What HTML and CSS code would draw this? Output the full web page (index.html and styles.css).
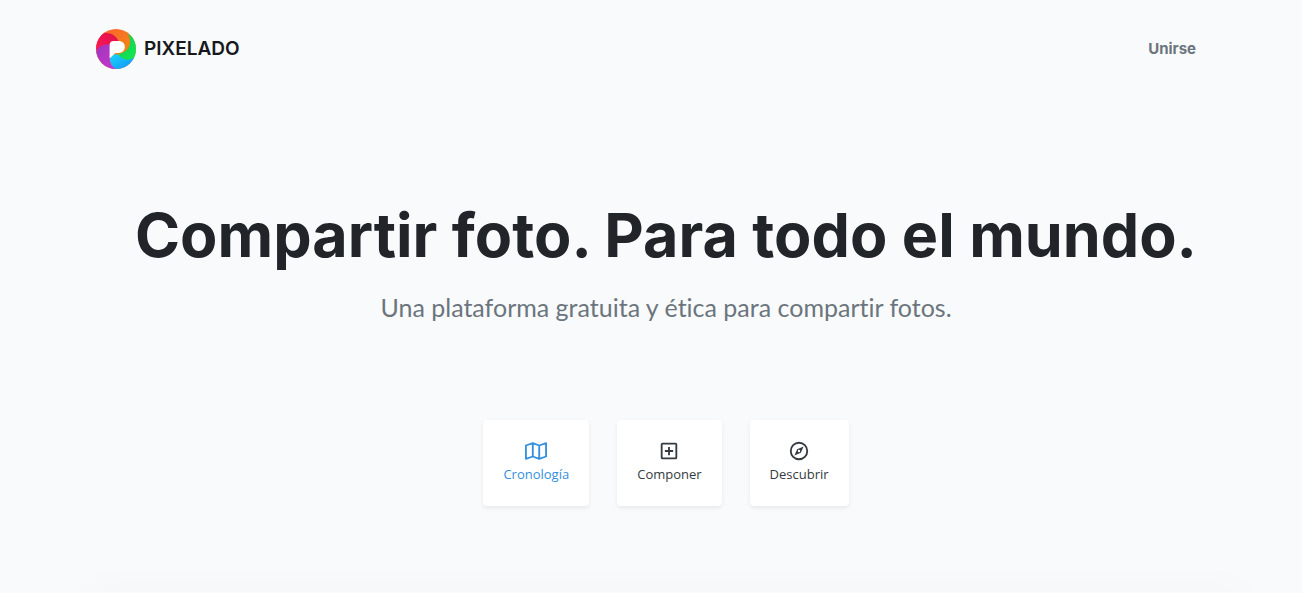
FILE: index.html
```html
<!DOCTYPE html>
<html lang="es">
<head>
<meta charset="utf-8">
<meta name="viewport" content="width=device-width, initial-scale=1">
<title>Pixelado</title>
<link rel="stylesheet" href="styles.css">
</head>
<body>
<div class="page">
  <header class="site-header">
    <a class="brand" href="#">
      <svg class="brand-logo" viewBox="0 0 50 50" aria-hidden="true">
        <defs>
          <clipPath id="disc"><circle cx="25" cy="25" r="25"/></clipPath>
          <linearGradient id="red" x1="0" y1="1" x2="1" y2="0"><stop offset="0" stop-color="#ff1a55"/><stop offset="1" stop-color="#dc0f4c"/></linearGradient>
          <linearGradient id="orange" x1="0" y1="0" x2="1" y2="1"><stop offset="0" stop-color="#ff5c34"/><stop offset="1" stop-color="#eb9a08"/></linearGradient>
          <linearGradient id="green" x1="0" y1="0" x2="1" y2="1"><stop offset="0" stop-color="#18c84a"/><stop offset="1" stop-color="#10f05a"/></linearGradient>
          <linearGradient id="blue" x1="0" y1="0" x2="1" y2="1"><stop offset="0" stop-color="#17d8f5"/><stop offset="1" stop-color="#1687ff"/></linearGradient>
          <linearGradient id="purple" x1="0" y1="0" x2="1" y2="1"><stop offset="0" stop-color="#9b35bc"/><stop offset="1" stop-color="#cf38cc"/></linearGradient>
        </defs>
        <g clip-path="url(#disc)">
          <rect width="50" height="50" fill="url(#orange)"/>
          <path d="M0 27V8L10 5C18 4 26 8 29 17L24 27Z" fill="url(#red)"/>
          <path d="M39 5C46 15 43 28 29 31L28 35C34 42 43 42 49 35L58 20Z" fill="url(#green)"/>
          <path d="M17 37C20 31 26 30 30 34C35 40 43 40 50 34V52H20Z" fill="url(#blue)"/>
          <path d="M-1 31C2 22 9 18 18 20V36C16 42 20 48 28 51H-1Z" fill="url(#purple)"/>
        </g>
        <path d="M17 37V20C17 17 19 15 22 15H28C33 15 36 18 36 22C36 27 33 30 28 30H24Z" fill="#fff"/>
      </svg>
      <span>PIXELADO</span>
    </a>
    <a class="join" href="#">Unirse</a>
  </header>
  <main class="hero">
    <h1 class="title">Compartir foto. Para todo el mundo.</h1>
    <p class="lead">Una plataforma gratuita y ética para compartir fotos.</p>
    <div class="tabs">
      <button class="tab tab-active" type="button">
        <svg class="tab-icon" viewBox="0 0 24 24" aria-hidden="true"><path d="M1 6 8.500 3.500 15.500 6 23 3.500V18L15.500 20.500 8.500 18 1 20.500ZM8.500 3.500V18M15.500 6V20.500"/></svg>
        <span>Cronología</span>
      </button>
      <button class="tab" type="button">
        <svg class="tab-icon" viewBox="0 0 24 24" aria-hidden="true"><rect x="4" y="4" width="16" height="16" rx="1"/><path d="M12 7.500V16.500M7.500 12H16.500"/></svg>
        <span>Componer</span>
      </button>
      <button class="tab" type="button">
        <svg class="tab-icon" viewBox="0 0 24 24" aria-hidden="true"><circle cx="12" cy="12" r="9"/><path class="needle" fill-rule="evenodd" d="M17 7 14 14 7 17 10 10ZM12 10.700A1.300 1.300 0 1 0 12 13.300 1.300 1.300 0 1 0 12 10.700Z"/></svg>
        <span>Descubrir</span>
      </button>
    </div>
  </main>
  <section class="preview"></section>
</div>
</body>
</html>
```

FILE: styles.css
```css
* { box-sizing: border-box; }
body {
  margin: 0;
  background: #f8fafc;
  color: #212529;
  font-family: Lato, sans-serif;
}
.page {
  max-width: 1302px;
  margin: 0 auto;
  padding: 29px 66px 0 96px;
}
.site-header {
  display: flex;
  justify-content: space-between;
  align-items: center;
  padding-right: 40px;
}
.brand {
  display: flex;
  align-items: center;
  gap: 8px;
  color: #16181b;
  font: 600 19px/24px Inter, sans-serif;
  text-decoration: none;
}
.brand-logo { width: 40px; height: 40px; }
.join {
  color: #6c757d;
  font: 700 15px/24px Inter, sans-serif;
  text-decoration: none;
}
.hero { padding: 130px 0 86px; text-align: center; }
.title {
  margin: 0 0 18px;
  font: 700 61px/72px Inter, sans-serif;
}
.lead {
  margin: 0;
  color: #6c757d;
  font-size: 25px;
  line-height: 36px;
  font-variant-ligatures: none;
}
.tabs {
  display: flex;
  justify-content: center;
  gap: 28px;
  margin-top: 95px;
}
.tab {
  display: flex;
  flex-direction: column;
  align-items: center;
  padding: 20px;
  border: 0;
  border-radius: 4px;
  background: #fff;
  box-shadow: 0 2px 4px rgba(0, 0, 0, 0.075);
  color: #343a40;
  font: 13px/24px "Open Sans", sans-serif;
  cursor: pointer;
}
.tab-active { color: #3490dc; }
.tab-icon {
  width: 22px;
  height: 22px;
  fill: none;
  stroke: currentColor;
  stroke-width: 2;
  stroke-linejoin: round;
}
.needle { fill: currentColor; stroke: none; }
.preview { box-shadow: 0 10px 40px 10px rgba(0, 0, 0, 0.03); }
```
